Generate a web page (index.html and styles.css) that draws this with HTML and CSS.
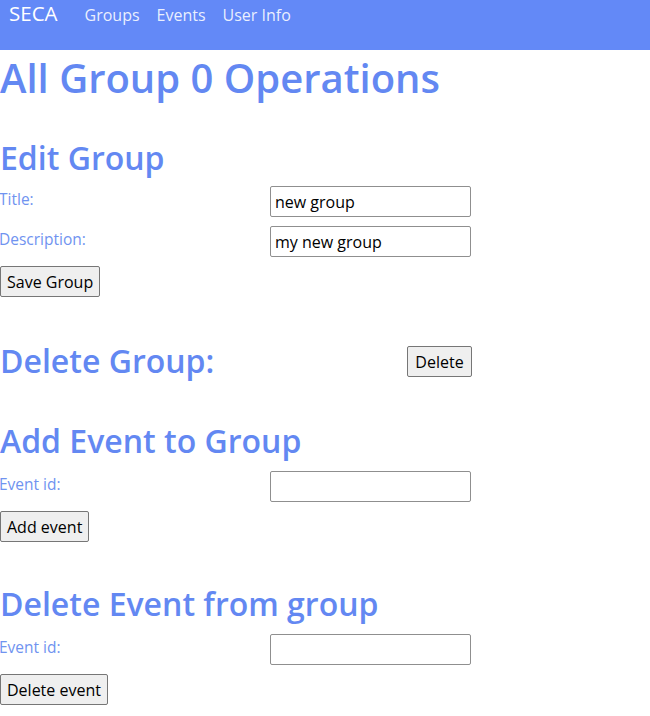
FILE: index.html
```html
<!DOCTYPE html>
<html>
<head>
<meta charset="utf-8">
<link rel="stylesheet" href="styles.css">
</head>
<body>
<nav class="navbar">
  <span class="brand">SECA</span>
  <a class="nav-link">Groups</a>
  <a class="nav-link">Events</a>
  <a class="nav-link">User Info</a>
</nav>
<main class="content">
  <h1 class="page-title">All Group 0 Operations</h1>

  <section class="section edit-section">
    <h2 class="section-title">Edit Group</h2>
    <div class="form-row">
      <label class="field-label">Title:</label>
      <input class="field-input" type="text" value="new group">
    </div>
    <div class="form-row">
      <label class="field-label">Description:</label>
      <input class="field-input" type="text" value="my new group">
    </div>
    <button class="btn">Save Group</button>
  </section>

  <section class="section delete-row">
    <h2 class="section-title">Delete Group:</h2>
    <button class="btn btn-delete">Delete</button>
  </section>

  <section class="section add-section">
    <h2 class="section-title">Add Event to Group</h2>
    <div class="form-row">
      <label class="field-label">Event id:</label>
      <input class="field-input" type="text">
    </div>
    <button class="btn">Add event</button>
  </section>

  <section class="section remove-section">
    <h2 class="section-title">Delete Event from group</h2>
    <div class="form-row">
      <label class="field-label">Event id:</label>
      <input class="field-input" type="text">
    </div>
    <button class="btn">Delete event</button>
  </section>
</main>
</body>
</html>
```

FILE: styles.css
```css
html, body {
  margin: 0;
  padding: 0;
  background: #ffffff;
  font-family: "Open Sans", "Noto Sans", sans-serif;
}

.navbar {
  height: 50px;
  background: #6389f7;
  display: flex;
  align-items: baseline;
  padding: 1px 0 0 9px;
  box-sizing: border-box;
  gap: 17px;
}

.brand {
  color: #ffffff;
  font-size: 20.5px;
  line-height: 24px;
  margin-right: 10px;
}

.nav-link {
  color: rgba(255, 255, 255, 0.88);
  font-size: 16px;
  line-height: 24px;
}

.content {
  color: #6388f2;
}

.page-title {
  font-size: 40px;
  font-weight: 600;
  margin: 4px 0 0 0;
  line-height: 48px;
}

.section-title {
  font-size: 32px;
  font-weight: 600;
  margin: 0 0 10px 0;
  line-height: 40px;
}

.edit-section {
  margin-top: 36px;
}

.edit-section .section-title {
  margin-bottom: 8px;
}

.delete-row {
  margin-top: 44px;
  display: grid;
  grid-template-columns: 407px 65px;
  justify-content: start;
  align-items: center;
}

.delete-row .section-title {
  margin: 0;
}

.btn-delete {
  margin-top: 1px;
  width: 65px;
  padding: 0;
}

.add-section {
  margin-top: 40px;
}

.remove-section {
  margin-top: 42px;
}

.form-row {
  display: grid;
  grid-template-columns: 270px 201px;
  align-items: start;
  margin-bottom: 9px;
}

.field-label {
  font-size: 15.5px;
  color: #7093f0;
  line-height: 26px;
  margin-left: -1px;
}

.field-input {
  width: 201px;
  height: 31px;
  box-sizing: border-box;
  border: 1px solid #8f8f8f;
  border-radius: 2px;
  font-family: "Open Sans", sans-serif;
  font-size: 16px;
  color: #000;
  padding: 1px 4px;
}

.btn {
  font-family: "Open Sans", sans-serif;
  font-size: 16px;
  color: #000;
  background: #efefef;
  border: 1px solid #767676;
  border-radius: 2px;
  height: 31px;
  padding: 0 6px;
}
```
